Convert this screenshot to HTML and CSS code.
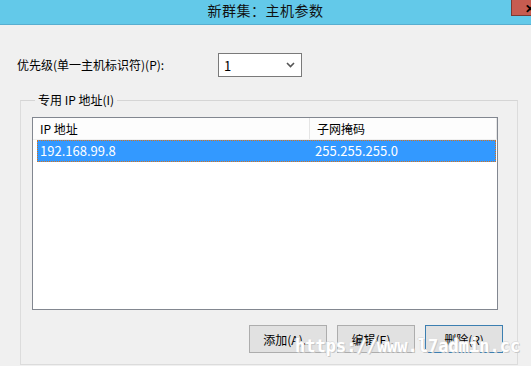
FILE: index.html
```html
<!DOCTYPE html>
<html lang="zh-CN">
<head>
    <meta charset="UTF-8">
    <title>新群集：主机参数</title>
    <link rel="stylesheet" href="styles.css">
</head>
<body>
    <div class="window">
        <div class="titlebar">
            <span></span>
            <span class="title">新群集：主机参数</span>
            <span class="close">✕</span>
        </div>
        <div class="content">
            <div class="priority">
                <label class="priority-label">优先级(单一主机标识符)(P):</label>
                <div class="combo">
                    <span>1</span>
                    <svg width="9" height="6" viewBox="0 0 9 6"><path d="M1 1 L4.5 4.5 L8 1" fill="none" stroke="#555" stroke-width="1.6"/></svg>
                </div>
            </div>
            <fieldset class="group">
                <legend>专用 IP 地址(I)</legend>
                <div class="listview">
                    <div class="header">
                        <div class="col col-ip">IP 地址</div>
                        <div class="col col-mask">子网掩码</div>
                    </div>
                    <div class="row selected">
                        <div class="col col-ip">192.168.99.8</div>
                        <div class="col col-mask">255.255.255.0</div>
                    </div>
                </div>
                <div class="buttons">
                    <button class="btn">添加(A)...</button>
                    <button class="btn">编辑(E)...</button>
                    <button class="btn default">删除(R)</button>
                </div>
            </fieldset>
        </div>
        <div class="watermark">https://www.l7admin.cc</div>
    </div>
</body>
</html>
```

FILE: styles.css
```css
body {
    margin: 0;
    font-family: "Noto Sans CJK SC", "Liberation Sans", sans-serif;
    font-size: 12px;
    color: #000;
    background: #f0f0f0;
}

.window {
    position: relative;
    width: 531px;
    height: 366px;
    overflow: hidden;
    background: #f0f0f0;
}

.titlebar {
    display: grid;
    grid-template-columns: 1fr auto 1fr;
    height: 24px;
    background: #63c9e9;
    border-bottom: 1px solid #58aed0;
    overflow: hidden;
}

.title {
    font-size: 14px;
    line-height: 20px;
    color: #111;
    letter-spacing: 0.5px;
}

.close {
    justify-self: end;
    align-self: start;
    width: 44px;
    height: 15px;
    margin-right: -25px;
    background: #c75c50;
    border-left: 1px solid #7a3a33;
    border-bottom: 1px solid #7a3a33;
    font-size: 12px;
    line-height: 15px;
    font-weight: bold;
    text-indent: 13px;
    color: #000;
}

.content {
    padding: 28px 0 0 17px;
}

.priority {
    display: flex;
    align-items: center;
    margin-bottom: 15px;
}

.priority-label {
    width: 201px;
    line-height: 16px;
}

.combo {
    display: flex;
    align-items: center;
    justify-content: space-between;
    box-sizing: border-box;
    width: 84px;
    height: 24px;
    padding: 0 6px 0 5px;
    background: #fff;
    border: 1px solid #7a7a7a;
    font-size: 13px;
}

.group {
    box-sizing: border-box;
    width: 498px;
    margin: 0 0 0 3px;
    padding: 9px 19px 11px 11px;
    border: 1px solid #dcdcdc;
    border-top-color: #d5d5d5;
}

.group legend {
    margin-left: 3px;
    padding: 0 3px;
    line-height: 16px;
}

.listview {
    box-sizing: border-box;
    height: 193px;
    background: #fff;
    border: 1px solid #828790;
}

.header {
    display: flex;
    height: 21px;
    line-height: 21px;
    background: #fdfdfd;
    border-bottom: 1px solid #f0f0f0;
}

.header .col-ip {
    box-sizing: border-box;
    width: 277px;
    padding-left: 7px;
    border-right: 1px solid #e5e5e5;
}

.header .col-mask {
    flex: 1;
    padding-left: 7px;
    border-right: 1px solid #e5e5e5;
}

.row {
    display: flex;
    box-sizing: border-box;
    height: 22px;
    margin: 0 1px 0 4px;
    line-height: 20px;
    font-size: 13px;
}

.row.selected {
    background: #3399ff;
    color: #fff;
    border: 1px dotted #d9731a;
}

.row .col-ip {
    width: 275px;
    padding-left: 2px;
}

.row .col-mask {
    flex: 1;
}

.buttons {
    display: flex;
    justify-content: flex-end;
    gap: 10px;
    margin: 15px -5px 0 0;
}

.btn {
    width: 78px;
    height: 28px;
    padding: 0;
    background: #e1e1e1;
    border: 1px solid #adadad;
    font-family: inherit;
    font-size: 12px;
    color: #000;
}

.btn.default {
    border-color: #3c7fb1;
}

/* watermark stamped over the screenshot */
.watermark {
    position: absolute;
    left: 295px;
    top: 336px;
    font-family: "DejaVu Sans Mono", monospace;
    font-weight: bold;
    font-size: 17px;
    color: #fff;
    text-shadow: 1px 1px 0 #c8c8c8, -1px 0 0 #e0e0e0, 0 -1px 0 #e0e0e0;
}
```
